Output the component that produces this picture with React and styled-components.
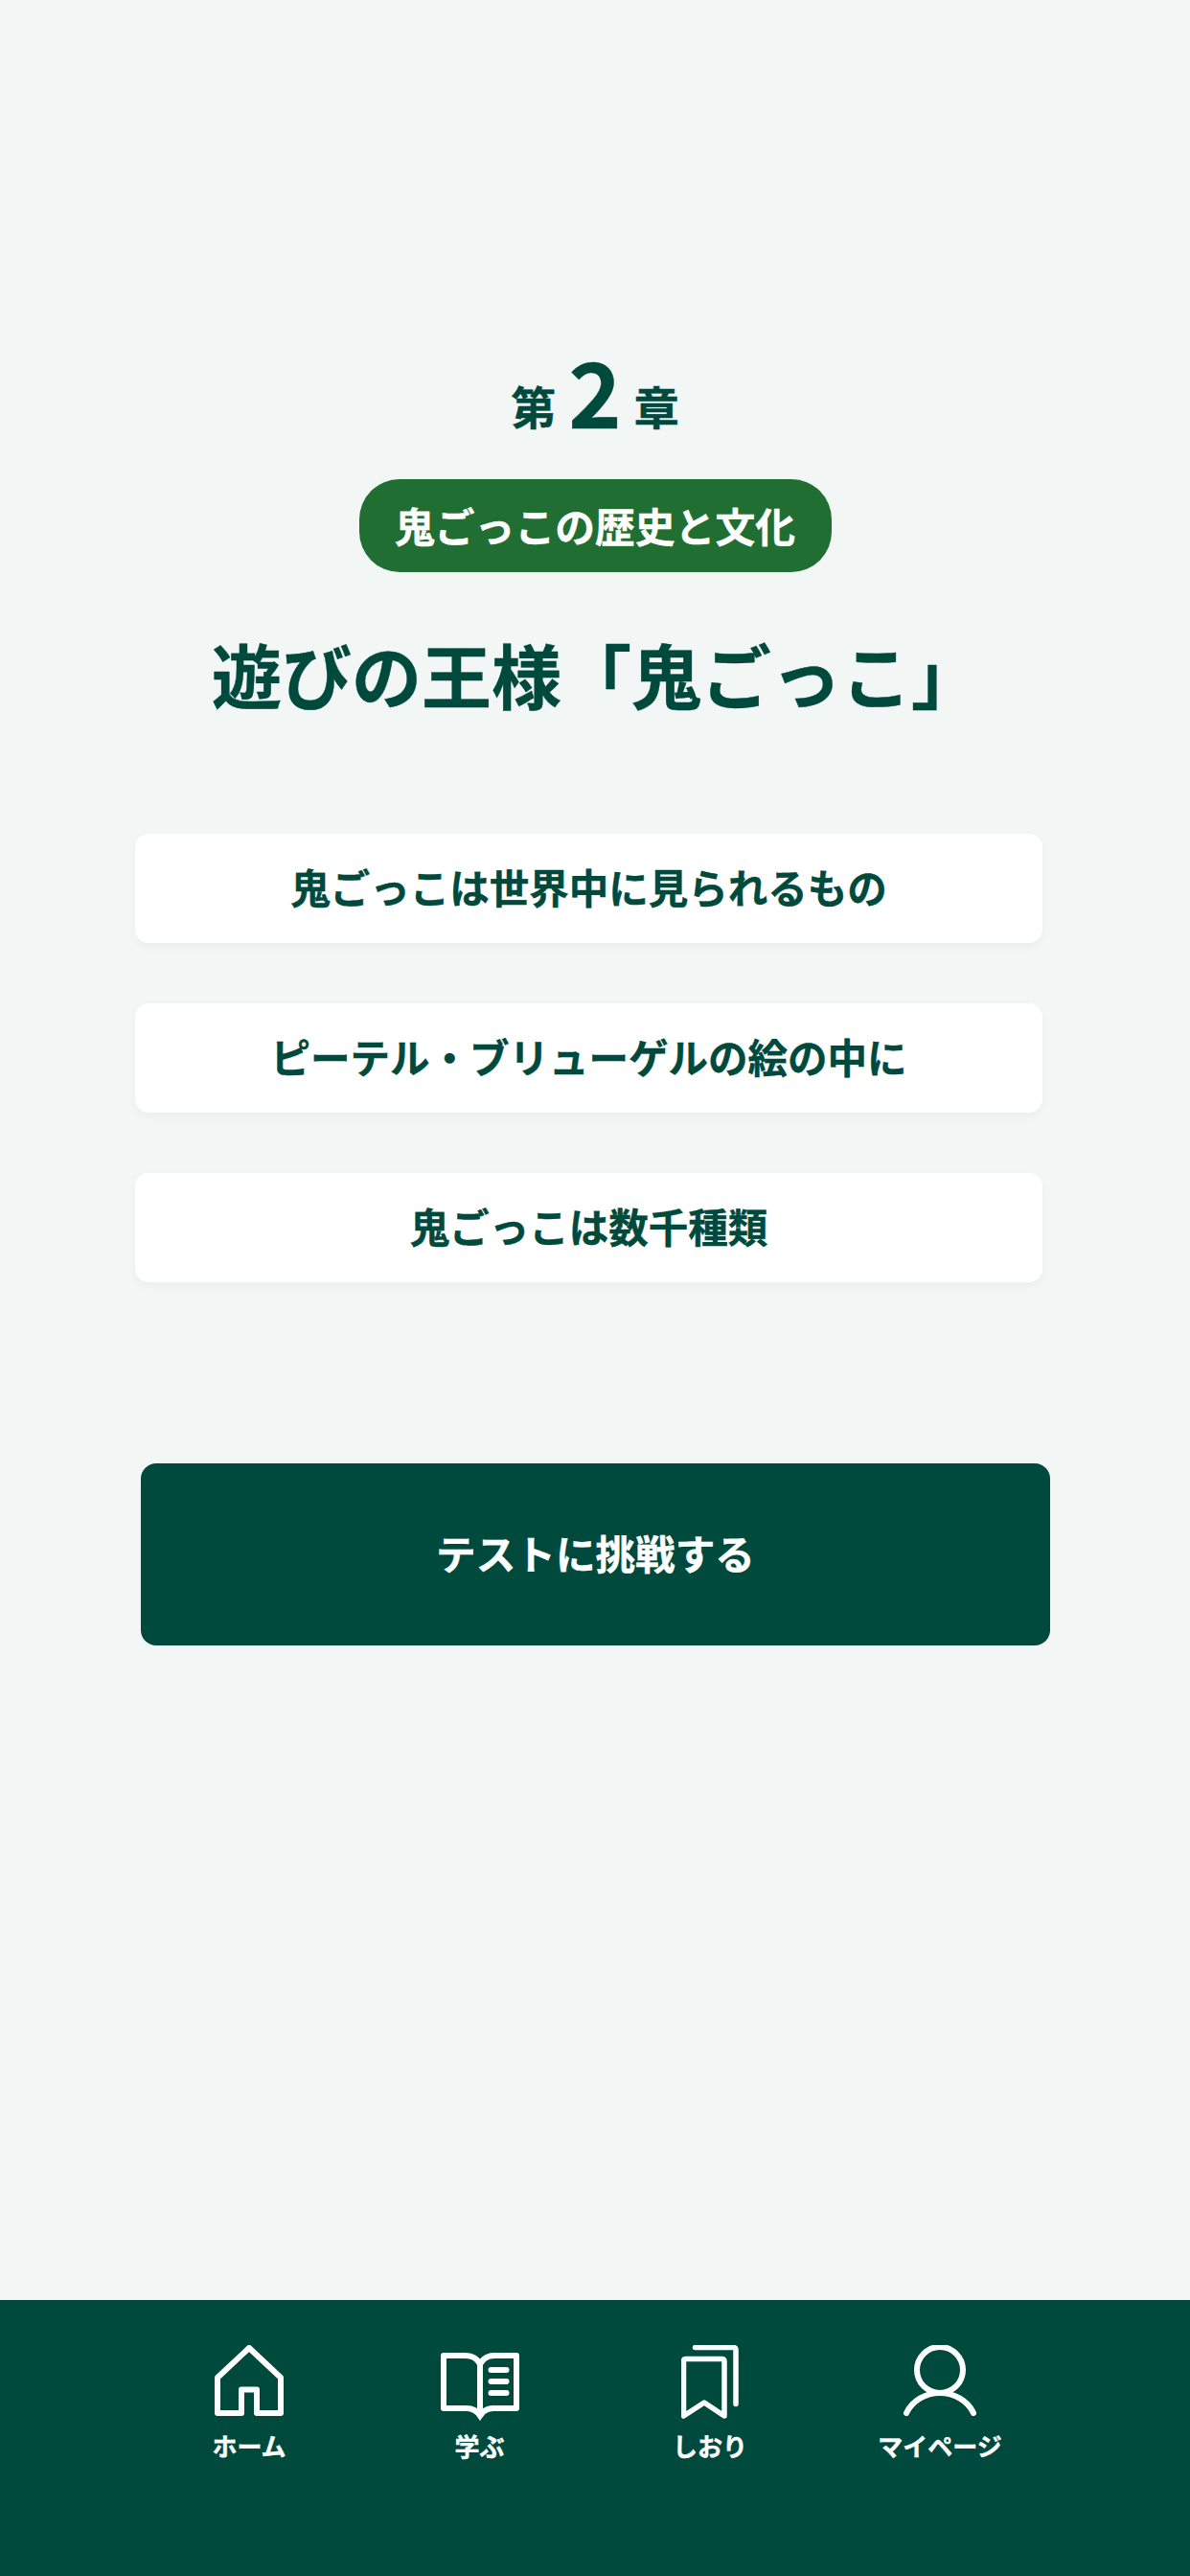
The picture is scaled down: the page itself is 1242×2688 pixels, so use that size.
import React from "react";
import styled, { createGlobalStyle } from "styled-components";

const GREEN = "#00493d";
const PAPER = "#f2f6f5";

const GlobalStyle = createGlobalStyle`
  html, body {
    margin: 0;
    padding: 0;
    background: ${PAPER};
  }
  * {
    box-sizing: border-box;
  }
`;

const Page = styled.div`
  width: 1242px;
  height: 2688px;
  display: flex;
  flex-direction: column;
  background: ${PAPER};
  color: ${GREEN};
  font-family: "Noto Sans CJK JP", "Noto Sans", sans-serif;
  font-weight: 700;
  -webkit-text-stroke: 0.4px currentColor;
  overflow: hidden;
`;

const Main = styled.main`
  flex: 1;
  display: flex;
  flex-direction: column;
  align-items: center;
  padding-top: 350px;
`;

const Chapter = styled.div`
  height: 112px;
  display: flex;
  align-items: center;
  justify-content: center;
  gap: 13px;
  line-height: 112px;
`;

const ChapterWord = styled.span`
  margin-top: 32px;
  font-size: 47px;
  line-height: 1;
`;

const ChapterNumber = styled.span`
  font-size: 94px;
`;

const Pill = styled.div`
  margin-top: 38px;
  width: 493px;
  height: 97px;
  display: flex;
  align-items: center;
  justify-content: center;
  border-radius: 42px;
  background: #206e31;
  color: #fff;
  font-size: 41.8px;
  line-height: 1;
`;

const Title = styled.h1`
  margin: 55px 0 0;
  padding-left: 3px;
  font-size: 73px;
  font-weight: 700;
  line-height: 100px;
  white-space: nowrap;
`;

const Sections = styled.div`
  align-self: flex-start;
  margin: 118px 0 0 141px;
  width: 947px;
  display: flex;
  flex-direction: column;
  gap: 63px;
`;

const SectionCard = styled.div`
  height: 114px;
  padding-bottom: 2px;
  display: flex;
  align-items: center;
  justify-content: center;
  border-radius: 14px;
  background: #fff;
  box-shadow: 0 4px 10px rgba(0, 73, 61, 0.04);
  font-size: 41.5px;
  line-height: 1;
`;

const TestButton = styled.button`
  align-self: flex-start;
  margin: 189px 0 0 147px;
  width: 949px;
  height: 190px;
  padding: 0 0 2px;
  border: 0;
  border-radius: 16px;
  background: ${GREEN};
  color: #fff;
  font: inherit;
  font-size: 41.6px;
  line-height: 1;
`;

const BottomNav = styled.nav`
  height: 288px;
  padding: 47px 0 0 140px;
  display: grid;
  grid-template-columns: 240px 241px 240px 240px;
  align-content: start;
  background: ${GREEN};
`;

const NavItem = styled.a`
  display: flex;
  flex-direction: column;
  align-items: center;
  color: #fff;
  font-size: 26px;
  font-weight: 700;
  line-height: 32px;
`;

const IconSlot = styled.div`
  height: 89px;
  display: flex;
  align-items: flex-start;
  justify-content: center;
`;

const HomeIcon = () => (
  <svg width="72" height="74" viewBox="0 0 72 74" fill="none" stroke="#fff" strokeWidth="6" strokeLinejoin="round">
    <path d="M36 3 L3 34 V71 H28 V46.5 H44 V71 H69 V34 Z" />
  </svg>
);

const BookSvg = styled.svg`
  margin-top: 8px;
`;

const BookIcon = () => (
  <BookSvg width="82" height="71" viewBox="0 0 82 71" fill="none" stroke="#fff" strokeWidth="6" strokeLinejoin="round">
    <path d="M41 12 C38 6 33 3 26 3 H3 V58 H27 C33 58 38 61 41 66 C44 61 49 58 55 58 H79 V3 H56 C49 3 44 6 41 12 V66" />
    <path d="M38 62 H44 L41 70 Z" fill="#fff" strokeWidth="1.5" />
    <path d="M52.5 18 H68.5 M52.5 30 H68.5 M52.5 42 H68.5" strokeLinecap="round" />
  </BookSvg>
);

const BookmarkIcon = () => (
  <svg width="60" height="77" viewBox="0 0 60 77" fill="none" stroke="#fff" strokeWidth="5.5" strokeLinecap="round" strokeLinejoin="round">
    <path d="M2.5 74 V17 Q2.5 14.5 5 14.5 H42 Q45 14.5 45 17 V74 L24 60 Z" />
    <path d="M14.5 2.5 H54 Q57 2.5 57 5 V61.5" />
  </svg>
);

const UserIcon = () => (
  <svg width="78" height="74" viewBox="0 0 78 74" fill="none" stroke="#fff" strokeWidth="6" strokeLinecap="round">
    <circle cx="39" cy="26" r="24" />
    <path d="M4 71 C10 58 24 50 39 50 S68 58 74 71" />
  </svg>
);

const sections = [
  "鬼ごっこは世界中に見られるもの",
  "ピーテル・ブリューゲルの絵の中に",
  "鬼ごっこは数千種類",
];

const navItems = [
  { label: "ホーム", icon: <HomeIcon /> },
  { label: "学ぶ", icon: <BookIcon /> },
  { label: "しおり", icon: <BookmarkIcon /> },
  { label: "マイページ", icon: <UserIcon /> },
];

export default function App() {
  return (
    <Page>
      <GlobalStyle />
      <Main>
        <Chapter>
          <ChapterWord>第</ChapterWord>
          <ChapterNumber>2</ChapterNumber>
          <ChapterWord>章</ChapterWord>
        </Chapter>
        <Pill>鬼ごっこの歴史と文化</Pill>
        <Title>遊びの王様「鬼ごっこ」</Title>
        <Sections>
          {sections.map((text) => (
            <SectionCard key={text}>{text}</SectionCard>
          ))}
        </Sections>
        <TestButton>テストに挑戦する</TestButton>
      </Main>
      <BottomNav>
        {navItems.map((item) => (
          <NavItem key={item.label}>
            <IconSlot>{item.icon}</IconSlot>
            {item.label}
          </NavItem>
        ))}
      </BottomNav>
    </Page>
  );
}
